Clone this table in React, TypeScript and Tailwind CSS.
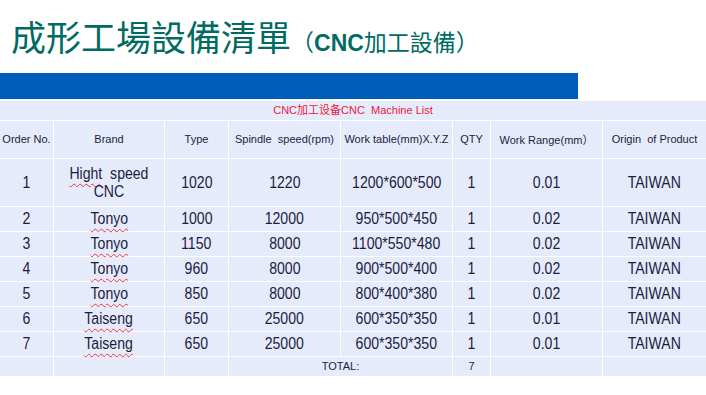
import React from "react";

const cols = "grid-cols-[53px_110px_63px_111px_111px_37px_111px_103px]";

type Row = { no: string; brand: string[]; type: string; speed: string; table: string; qty: string; range: string; origin: string };

const rows: Row[] = [
  { no: "1", brand: ["Hight", " speed"], type: "1020", speed: "1220", table: "1200*600*500", qty: "1", range: "0.01", origin: "TAIWAN" },
  { no: "2", brand: ["Tonyo"], type: "1000", speed: "12000", table: "950*500*450", qty: "1", range: "0.02", origin: "TAIWAN" },
  { no: "3", brand: ["Tonyo"], type: "1150", speed: "8000", table: "1100*550*480", qty: "1", range: "0.02", origin: "TAIWAN" },
  { no: "4", brand: ["Tonyo"], type: "960", speed: "8000", table: "900*500*400", qty: "1", range: "0.02", origin: "TAIWAN" },
  { no: "5", brand: ["Tonyo"], type: "850", speed: "8000", table: "800*400*380", qty: "1", range: "0.02", origin: "TAIWAN" },
  { no: "6", brand: ["Taiseng"], type: "650", speed: "25000", table: "600*350*350", qty: "1", range: "0.01", origin: "TAIWAN" },
  { no: "7", brand: ["Taiseng"], type: "650", speed: "25000", table: "600*350*350", qty: "1", range: "0.01", origin: "TAIWAN" },
];

const cell = "bg-[#E6EBFC] flex items-center justify-center text-center";
const wavy = "underline decoration-wavy decoration-[#e83a3a] decoration-[1px] underline-offset-[4px]";

function D({ children }: { children: React.ReactNode }) {
  return <span className="inline-block scale-x-[0.88] whitespace-nowrap">{children}</span>;
}

export default function App() {
  return (
    <div className="w-[706px] h-[395px] bg-white overflow-hidden" style={{ fontFamily: '"Liberation Sans", Arial, sans-serif' }}>
      <div className="h-[73px] flex items-baseline pl-[11px] pt-[14px] text-[#006B63]">
        <span className="text-[35px] leading-[44px]" style={{ fontFamily: '"Noto Sans CJK TC", "Noto Sans CJK SC", sans-serif' }}>
          成形工場設備清單
        </span>
        <span className="text-[23px] leading-[30px]" style={{ fontFamily: '"Noto Sans CJK TC", sans-serif' }}>（</span>
        <span className="text-[23px] leading-[30px] font-bold" style={{ fontFamily: '"Liberation Sans", Arial, sans-serif' }}>CNC</span>
        <span className="text-[23px] leading-[30px]" style={{ fontFamily: '"Noto Sans CJK TC", sans-serif' }}>加工設備）</span>
      </div>
      <div className="w-[578px] h-[26px] bg-[#005CB9]" />
      <div className={`mt-[2px] grid ${cols} gap-px bg-white text-[#1C1D3D]`}>
        <div className={`${cell} col-span-8 h-[19px] text-[11px] text-[#F0173A]`}>
          <span style={{ fontFamily: '"Liberation Sans", "Noto Sans CJK SC", sans-serif' }}>CNC加工设备CNC&nbsp;&nbsp;Machine List</span>
        </div>
        {["Order No.", "Brand", "Type", "Spindle  speed(rpm)", "Work table(mm)X.Y.Z", "QTY", "Work Range(mm)", "Origin  of Product"].map((h, i) => (
          <div key={i} className={`${cell} h-[37px] text-[11px] whitespace-pre`}>
            {h === "Work Range(mm)" ? (
              <span>
                Work Range(mm<span style={{ fontFamily: '"Noto Sans CJK SC", sans-serif' }}>）</span>
              </span>
            ) : (
              h
            )}
          </div>
        ))}
        {rows.map((r, idx) => {
          const h = idx === 0 ? "h-[47px]" : "h-[24px]";
          return (
            <React.Fragment key={r.no}>
              <div className={`${cell} ${h} text-[16px]`}><D>{r.no}</D></div>
              <div className={`${cell} ${h} text-[16px] leading-[18px]`}>
                {idx === 0 ? (
                  <span className="inline-block scale-x-[0.88] whitespace-nowrap">
                    <span className={wavy}>Hight</span>&nbsp; speed
                    <br />
                    CNC
                  </span>
                ) : (
                  <D><span className={wavy}>{r.brand[0]}</span></D>
                )}
              </div>
              <div className={`${cell} ${h} text-[16px]`}><D>{r.type}</D></div>
              <div className={`${cell} ${h} text-[16px]`}><D>{r.speed}</D></div>
              <div className={`${cell} ${h} text-[16px]`}><D>{r.table}</D></div>
              <div className={`${cell} ${h} text-[16px]`}><D>{r.qty}</D></div>
              <div className={`${cell} ${h} text-[16px]`}><D>{r.range}</D></div>
              <div className={`${cell} ${h} text-[16px]`}><D>{r.origin}</D></div>
            </React.Fragment>
          );
        })}
        <div className={`${cell} h-[19px]`} />
        <div className={`${cell} h-[19px]`} />
        <div className={`${cell} h-[19px]`} />
        <div className={`${cell} col-span-2 h-[19px] text-[11px]`}>TOTAL:</div>
        <div className={`${cell} h-[19px] text-[11px]`}>7</div>
        <div className={`${cell} h-[19px]`} />
        <div className={`${cell} h-[19px]`} />
      </div>
    </div>
  );
}
